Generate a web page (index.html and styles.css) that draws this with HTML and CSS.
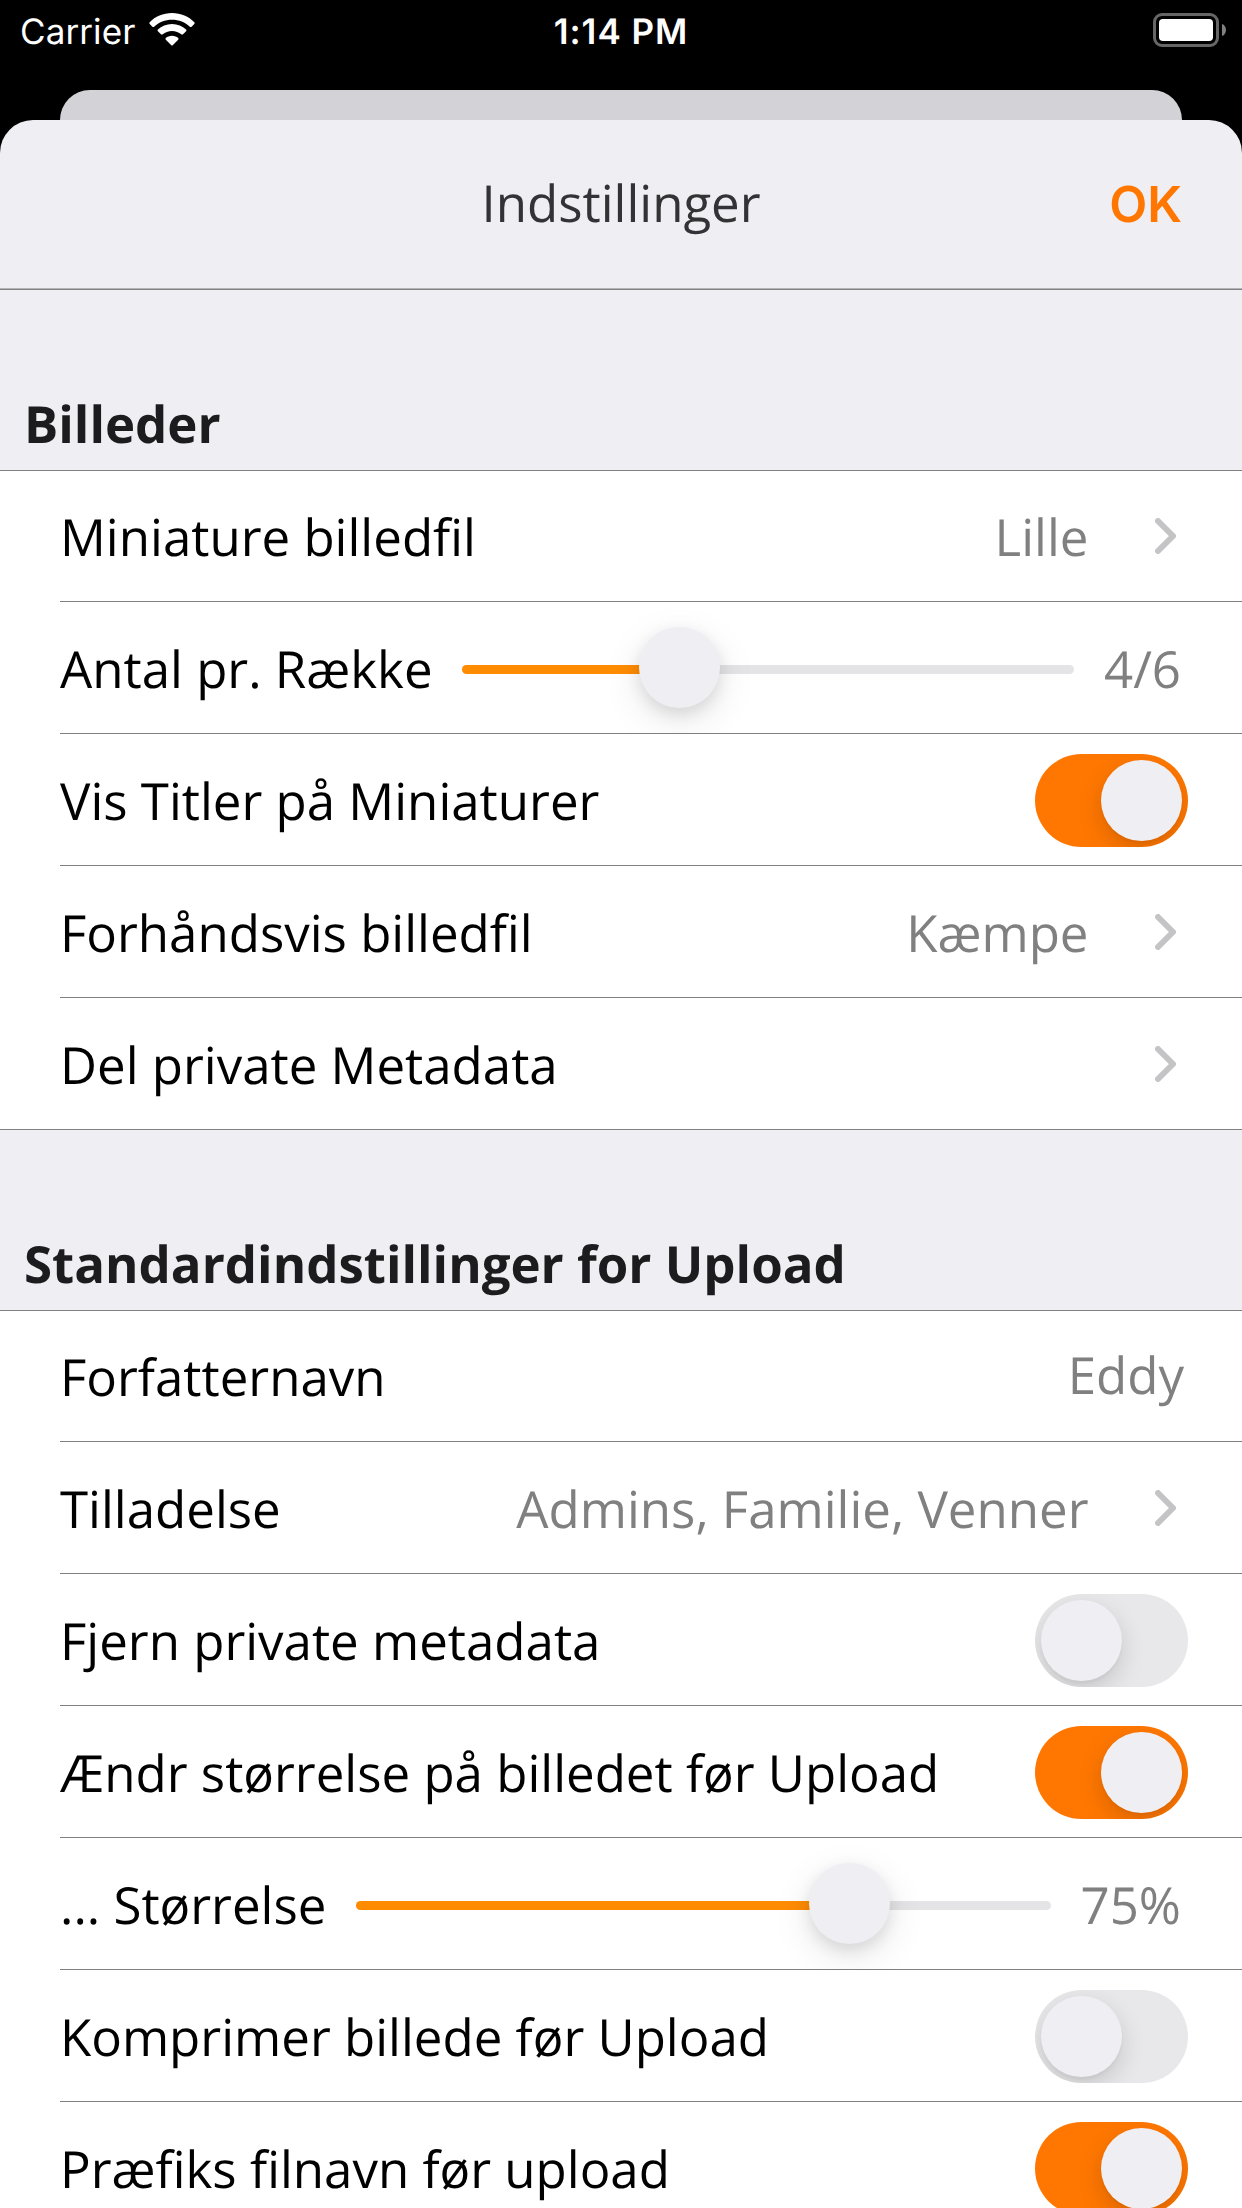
FILE: index.html
```html
<!DOCTYPE html>
<html lang="da">
<head>
<meta charset="utf-8">
<title>Indstillinger</title>
<link rel="stylesheet" href="styles.css">
</head>
<body>
<svg class="defs" width="0" height="0" aria-hidden="true">
  <symbol id="chevron" viewBox="0 0 21 36"><path d="M3 3 18 18 3 33" fill="none" stroke="currentColor" stroke-width="6" stroke-linecap="round" stroke-linejoin="round"/></symbol>
</svg>
<div class="screen">
  <header class="status">
    <div class="status-left">
      <span class="carrier">Carrier</span>
      <svg class="wifi" viewBox="0 0 46 33" fill="#fff">
        <path d="M23 0C31.900 0 39.800 3.500 45.300 9.200c.500.500.500 1.200 0 1.700L42.600 13.700c-.500.500-1.200.500-1.700 0C36.200 9.300 29.900 6.700 23 6.700S9.800 9.300 5.100 13.700c-.500.500-1.200.500-1.700 0L.700 10.900c-.500-.500-.500-1.200 0-1.700C6.200 3.500 14.100 0 23 0Z"/>
        <path d="M23 11c5.500 0 10.400 2.100 14.100 5.500.500.500.500 1.200 0 1.700l-3.100 3.100c-.500.500-1.200.500-1.700 0C29.800 19.200 26.600 17.900 23 17.900s-6.800 1.300-9.300 3.400c-.500.500-1.200.500-1.700 0l-3.100-3.100c-.500-.500-.500-1.200 0-1.700C12.600 13.100 17.500 11 23 11Z"/>
        <path d="M23 22.800c2.500 0 4.700.9 6.200 2.300.500.500.500 1.100 0 1.600l-5.500 5.600c-.400.400-1 .4-1.400 0l-5.500-5.600c-.500-.500-.500-1.100 0-1.600 1.500-1.400 3.700-2.300 6.200-2.300Z"/>
      </svg>
    </div>
    <span class="clock">1:14 PM</span>
    <svg class="battery" viewBox="0 0 73 34">
      <rect x="1.500" y="1.500" width="63" height="31" rx="7.500" fill="none" stroke="#666" stroke-width="3"/>
      <rect x="6" y="6" width="54" height="22" rx="4" fill="#fff"/>
      <path d="M69 11c2.400.6 4 3.100 4 6s-1.600 5.400-4 6Z" fill="#808080"/>
    </svg>
  </header>
  <div class="back-card"></div>
  <main class="sheet">
    <nav class="navbar">
      <span class="nav-title">Indstillinger</span>
      <span class="nav-ok">OK</span>
    </nav>

    <h2 class="group-title">Billeder</h2>
    <section class="group">
      <div class="row"><span class="label">Miniature billedfil</span><span class="value">Lille</span><svg class="chevron"><use href="#chevron"/></svg></div>
      <div class="row"><span class="label">Antal pr. Række</span><div class="slider slider-count"><div class="fill"></div><div class="thumb"></div></div><span class="value">4/6</span></div>
      <div class="row"><span class="label">Vis Titler på Miniaturer</span><div class="toggle on"><div class="knob"></div></div></div>
      <div class="row"><span class="label">Forhåndsvis billedfil</span><span class="value">Kæmpe</span><svg class="chevron"><use href="#chevron"/></svg></div>
      <div class="row"><span class="label">Del private Metadata</span><svg class="chevron"><use href="#chevron"/></svg></div>
    </section>

    <h2 class="group-title">Standardindstillinger for Upload</h2>
    <section class="group">
      <div class="row"><span class="label">Forfatternavn</span><span class="value value-input">Eddy</span></div>
      <div class="row"><span class="label">Tilladelse</span><span class="value">Admins, Familie, Venner</span><svg class="chevron"><use href="#chevron"/></svg></div>
      <div class="row"><span class="label">Fjern private metadata</span><div class="toggle"><div class="knob"></div></div></div>
      <div class="row"><span class="label">Ændr størrelse på billedet før Upload</span><div class="toggle on"><div class="knob"></div></div></div>
      <div class="row"><span class="label">... Størrelse</span><div class="slider slider-size"><div class="fill"></div><div class="thumb"></div></div><span class="value">75%</span></div>
      <div class="row"><span class="label">Komprimer billede før Upload</span><div class="toggle"><div class="knob"></div></div></div>
      <div class="row"><span class="label">Præfiks filnavn før upload</span><div class="toggle on"><div class="knob"></div></div></div>
    </section>
  </main>
</div>
</body>
</html>
```
FILE: styles.css
```css
* { box-sizing: border-box; }
html, body { margin: 0; background: #000; }
body { overflow: hidden; }
.defs { position: absolute; }

.screen {
  width: 1242px;
  height: 2208px;
  overflow: hidden;
  display: flex;
  flex-direction: column;
  background: #000;
  font-family: "Open Sans", "Noto Sans", sans-serif;
  font-size: 51px;
  line-height: 70px;
  text-rendering: geometricPrecision;
  color: #000;
}

/* Status bar */
.status {
  flex: none;
  height: 90px;
  padding: 9px 16px 0 20px;
  display: grid;
  grid-template-columns: 1fr auto 1fr;
  align-items: start;
  color: #fff;
  font-family: Inter, "Liberation Sans", sans-serif;
  font-size: 35px;
  line-height: 46px;
}
.status-left { display: flex; gap: 14px; }
.carrier { letter-spacing: 0.1px; }
.wifi { width: 46px; height: 33px; margin-top: 4px; }
.clock { font-weight: 600; letter-spacing: 1px; margin-right: 4px; }
.battery { width: 73px; height: 34px; margin-top: 4px; justify-self: end; }

/* Stacked sheets */
.back-card {
  flex: none;
  height: 30px;
  margin: 0 60px;
  border-radius: 30px 30px 0 0;
  background: #d3d2d7;
}
.sheet {
  flex: none;
  background: #efeef3;
  border-radius: 33px 33px 0 0;
}
.navbar {
  height: 170px;
  padding: 0 60px 5px;
  display: grid;
  grid-template-columns: 1fr auto 1fr;
  align-items: center;
  border-bottom: 1px solid #808080;
  box-shadow: inset 0 -1px #b4b4b6;
}
.nav-title { grid-column: 2; color: #333335; }
.nav-ok {
  justify-self: end;
  padding-top: 4px;
  color: #ff7700;
  font-family: Inter, "Liberation Sans", sans-serif;
  font-size: 49.5px;
  font-weight: 600;
}

/* Groups */
.group-title {
  height: 180px;
  margin: 0;
  padding: 98px 24px 0;
  font-size: 51px;
  font-weight: 700;
  color: #1c1c1e;
}
.group {
  border-top: 1px solid #808083;
  border-bottom: 1px solid #808083;
  background: #fff;
  padding-left: 60px;
}
.row {
  height: 132px;
  padding: 1px 60px 0 0;
  display: flex;
  align-items: center;
  border-bottom: 1px solid #808083;
}
.row:first-child { height: 131px; padding-top: 0; }
.row:last-child { height: 131px; border-bottom: 0; }
.label { white-space: nowrap; }
.value { margin-left: auto; color: #808080; white-space: nowrap; }
.value-input { margin-right: -2px; padding-bottom: 4px; }
.chevron { flex: none; width: 21px; height: 36px; margin: 0 6px 0 auto; color: #c4c4c6; }
.value + .chevron { margin-left: 66.5px; }

/* Switch */
.toggle {
  flex: none;
  width: 153px;
  height: 93px;
  margin: 0 -6px 0 auto;
  padding: 6px;
  display: flex;
  border-radius: 47px;
  overflow: hidden;
  background: #e8e8ea;
}
.toggle.on { justify-content: flex-end; background: #ff7700; }
.knob {
  width: 81px;
  height: 81px;
  border-radius: 50%;
  background: #efeef3;
  box-shadow: 0 9px 24px rgba(0, 0, 0, 0.15), 0 3px 3px rgba(0, 0, 0, 0.03);
}

/* Slider */
.slider {
  flex: 1;
  position: relative;
  height: 130px;
  margin: 0 30px 0 29.5px;
  display: flex;
  align-items: center;
  overflow-y: clip;
}
.slider + .value { margin-right: 1px; }
.slider::before {
  content: "";
  position: absolute;
  left: 0;
  right: 0;
  top: 62px;
  height: 9px;
  border-radius: 5px;
  background: #e4e4e6;
}
.fill {
  position: relative;
  height: 9px;
  margin-top: 3px;
  border-radius: 5px 0 0 5px;
  background: #ff8c00;
}
.slider-count .fill { width: 184px; }
.slider-size .fill { width: 460px; }
.thumb {
  position: relative;
  flex: none;
  width: 81px;
  height: 81px;
  margin: 0 0 1px -7px;
  border-radius: 50%;
  background: #efeef3;
  box-shadow: 0 12px 39px rgba(0, 0, 0, 0.1), 0 6px 16px rgba(0, 0, 0, 0.1);
}
```
